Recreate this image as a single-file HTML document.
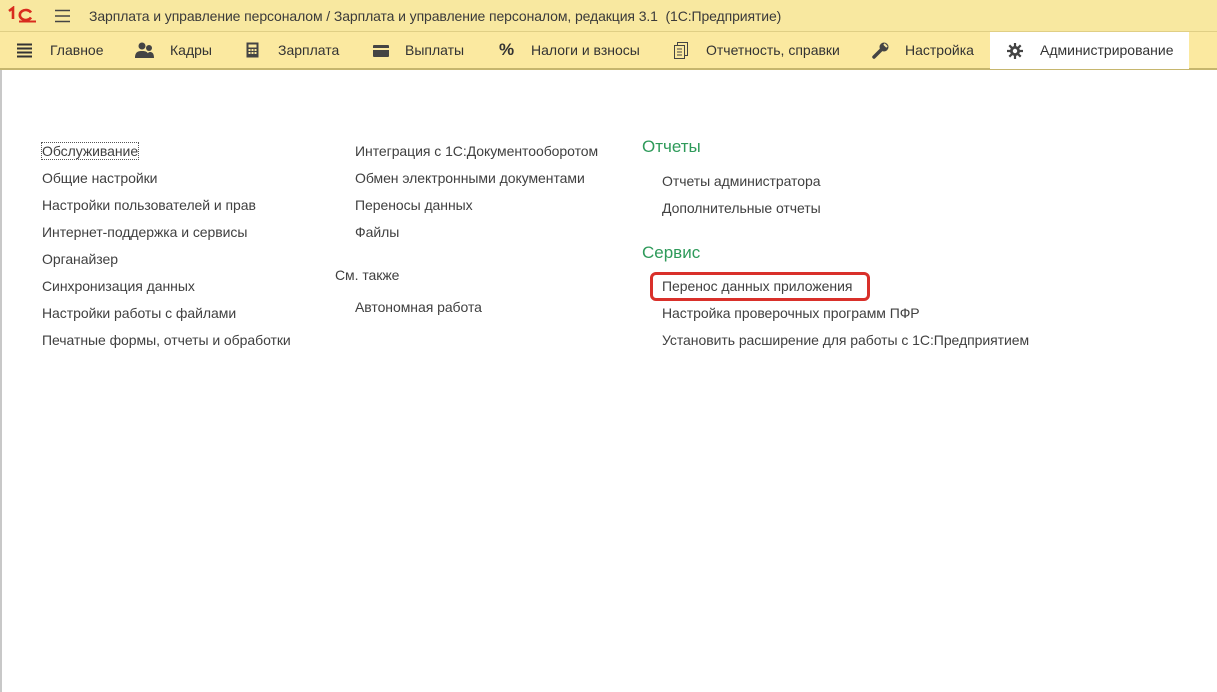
<!DOCTYPE html>
<html><head><meta charset="utf-8"><style>
*{margin:0;padding:0;box-sizing:border-box}
body{width:1217px;height:692px;overflow:hidden;background:#fff;font-family:"Liberation Sans","Noto Sans CJK SC",sans-serif;color:#404040;position:relative}
#title{position:absolute;left:0;top:0;width:1217px;height:32px;background:#f8e8a0;border-bottom:1px solid #e0cf85}
#title .t{position:absolute;left:89px;top:8px;font-size:14px;color:#3a3a3a;white-space:nowrap;letter-spacing:-0.1px}
#nav{position:absolute;left:0;top:32px;width:1217px;height:38px;background:#fbe9a0;border-bottom:2px solid #c6b66e}
.ni{position:absolute;top:0;height:36px;font-size:14px;color:#333;line-height:36px;white-space:nowrap}
.act{background:#fff;}
#content{position:absolute;left:0;top:70px;width:1217px;height:622px;border-left:2px solid #c8c8c8}
.l{position:absolute;font-size:14px;color:#404040;white-space:nowrap;letter-spacing:-0.05px}
.h{position:absolute;font-size:17px;color:#2e9a5a;white-space:nowrap}
svg{position:absolute}
</style></head><body>
<div id="title">
<svg style="left:7px;top:6px" width="30" height="18" viewBox="0 0 30 18"><path d="M2 5l4-3v11" stroke="#d82b1e" stroke-width="2.6" fill="none"/><path d="M24 6.5a6 5 0 1 0 0 5" stroke="#d82b1e" stroke-width="2.6" fill="none"/><path d="M12 15.5h17" stroke="#d82b1e" stroke-width="2"/></svg>
<svg style="left:55px;top:9px" width="16" height="14"><path d="M0 1.5h15M0 7h15M0 12.5h15" stroke="#444" stroke-width="1.4"/></svg>
<div class="t">Зарплата и управление персоналом / Зарплата и управление персоналом, редакция 3.1&nbsp; (1С:Предприятие)</div>
</div>
<div id="nav">
<svg style="left:17px;top:11px" width="16" height="15"><path d="M0 1.5h15M0 5.5h15M0 9.5h15M0 13.5h15" stroke="#333" stroke-width="2"/></svg>
<div class="ni" style="left:50px">Главное</div>
<svg style="left:135px;top:10px" width="20" height="17"><circle cx="7" cy="4" r="3.5" fill="#444"/><circle cx="14" cy="6" r="3" fill="#444"/><path d="M0 16c0-6 3-7 7-7s7 1 7 7zM12 16c0-4 1-6 3-6s4 1 4 6z" fill="#444"/></svg>
<div class="ni" style="left:170px">Кадры</div>
<svg style="left:246px;top:10px" width="13" height="16"><rect x="0.5" y="0.5" width="12" height="15" fill="#444"/><rect x="2.5" y="2.5" width="8" height="3" fill="#fbe9a0"/><g fill="#fbe9a0"><rect x="2.5" y="7" width="2" height="2"/><rect x="5.5" y="7" width="2" height="2"/><rect x="8.5" y="7" width="2" height="2"/><rect x="2.5" y="10" width="2" height="2"/><rect x="5.5" y="10" width="2" height="2"/><rect x="8.5" y="10" width="2" height="2"/></g></svg>
<div class="ni" style="left:278px">Зарплата</div>
<svg style="left:373px;top:13px" width="16" height="12"><rect x="0" y="0" width="16" height="12" rx="1" fill="#444"/><rect x="0" y="3" width="16" height="2" fill="#fbe9a0"/></svg>
<div class="ni" style="left:405px">Выплаты</div>
<div class="ni" style="left:499px;font-size:17px;font-weight:bold;color:#333">%</div>
<div class="ni" style="left:531px">Налоги и взносы</div>
<svg style="left:674px;top:10px" width="14" height="17"><rect x="3.5" y="0.5" width="10" height="13" fill="none" stroke="#444"/><rect x="0.5" y="3.5" width="10" height="13" fill="#fbe9a0" stroke="#444"/><path d="M3 7h5M3 10h5M3 13h5" stroke="#444"/></svg>
<div class="ni" style="left:706px">Отчетность, справки</div>
<svg style="left:872px;top:10px" width="17" height="17"><path d="M2 15l8-8" stroke="#444" stroke-width="3.5" stroke-linecap="round"/><circle cx="12" cy="5" r="4.5" fill="#444"/><path d="M12 2l3 3" stroke="#fbe9a0" stroke-width="2"/></svg>
<div class="ni" style="left:905px">Настройка</div>
<div class="ni act" style="left:990px;width:199px;height:37px"></div>
<svg style="left:1007px;top:11px" width="16" height="16" viewBox="0 0 16 16"><g stroke="#444" stroke-width="2.2"><path d="M8 0v16M0 8h16M2.3 2.3l11.4 11.4M13.7 2.3L2.3 13.7"/></g><circle cx="8" cy="8" r="5" fill="#444"/><circle cx="8" cy="8" r="2.2" fill="#fff"/></svg>
<div class="ni" style="left:1040px">Администрирование</div>
</div>
<div id="content"></div>
<div class="l" style="left:41px;top:142px;border:1px dotted #555;padding:0 0 0 0">Обслуживание</div>
<div class="l" style="left:42px;top:170px">Общие настройки</div>
<div class="l" style="left:42px;top:197px">Настройки пользователей и прав</div>
<div class="l" style="left:42px;top:224px">Интернет-поддержка и сервисы</div>
<div class="l" style="left:42px;top:251px">Органайзер</div>
<div class="l" style="left:42px;top:278px">Синхронизация данных</div>
<div class="l" style="left:42px;top:305px">Настройки работы с файлами</div>
<div class="l" style="left:42px;top:332px">Печатные формы, отчеты и обработки</div>
<div class="l" style="left:355px;top:143px">Интеграция с 1С:Документооборотом</div>
<div class="l" style="left:355px;top:170px">Обмен электронными документами</div>
<div class="l" style="left:355px;top:197px">Переносы данных</div>
<div class="l" style="left:355px;top:224px">Файлы</div>
<div class="l" style="left:335px;top:267px">См. также</div>
<div class="l" style="left:355px;top:299px">Автономная работа</div>
<div class="h" style="left:642px;top:137px">Отчеты</div>
<div class="l" style="left:662px;top:173px">Отчеты администратора</div>
<div class="l" style="left:662px;top:200px">Дополнительные отчеты</div>
<div class="h" style="left:642px;top:243px">Сервис</div>
<div style="position:absolute;left:650px;top:272px;width:220px;height:29px;border:3px solid #d9302a;border-radius:6px"></div>
<div class="l" style="left:662px;top:278px">Перенос данных приложения</div>
<div class="l" style="left:662px;top:305px">Настройка проверочных программ ПФР</div>
<div class="l" style="left:662px;top:332px">Установить расширение для работы с 1С:Предприятием</div>
</body></html>
